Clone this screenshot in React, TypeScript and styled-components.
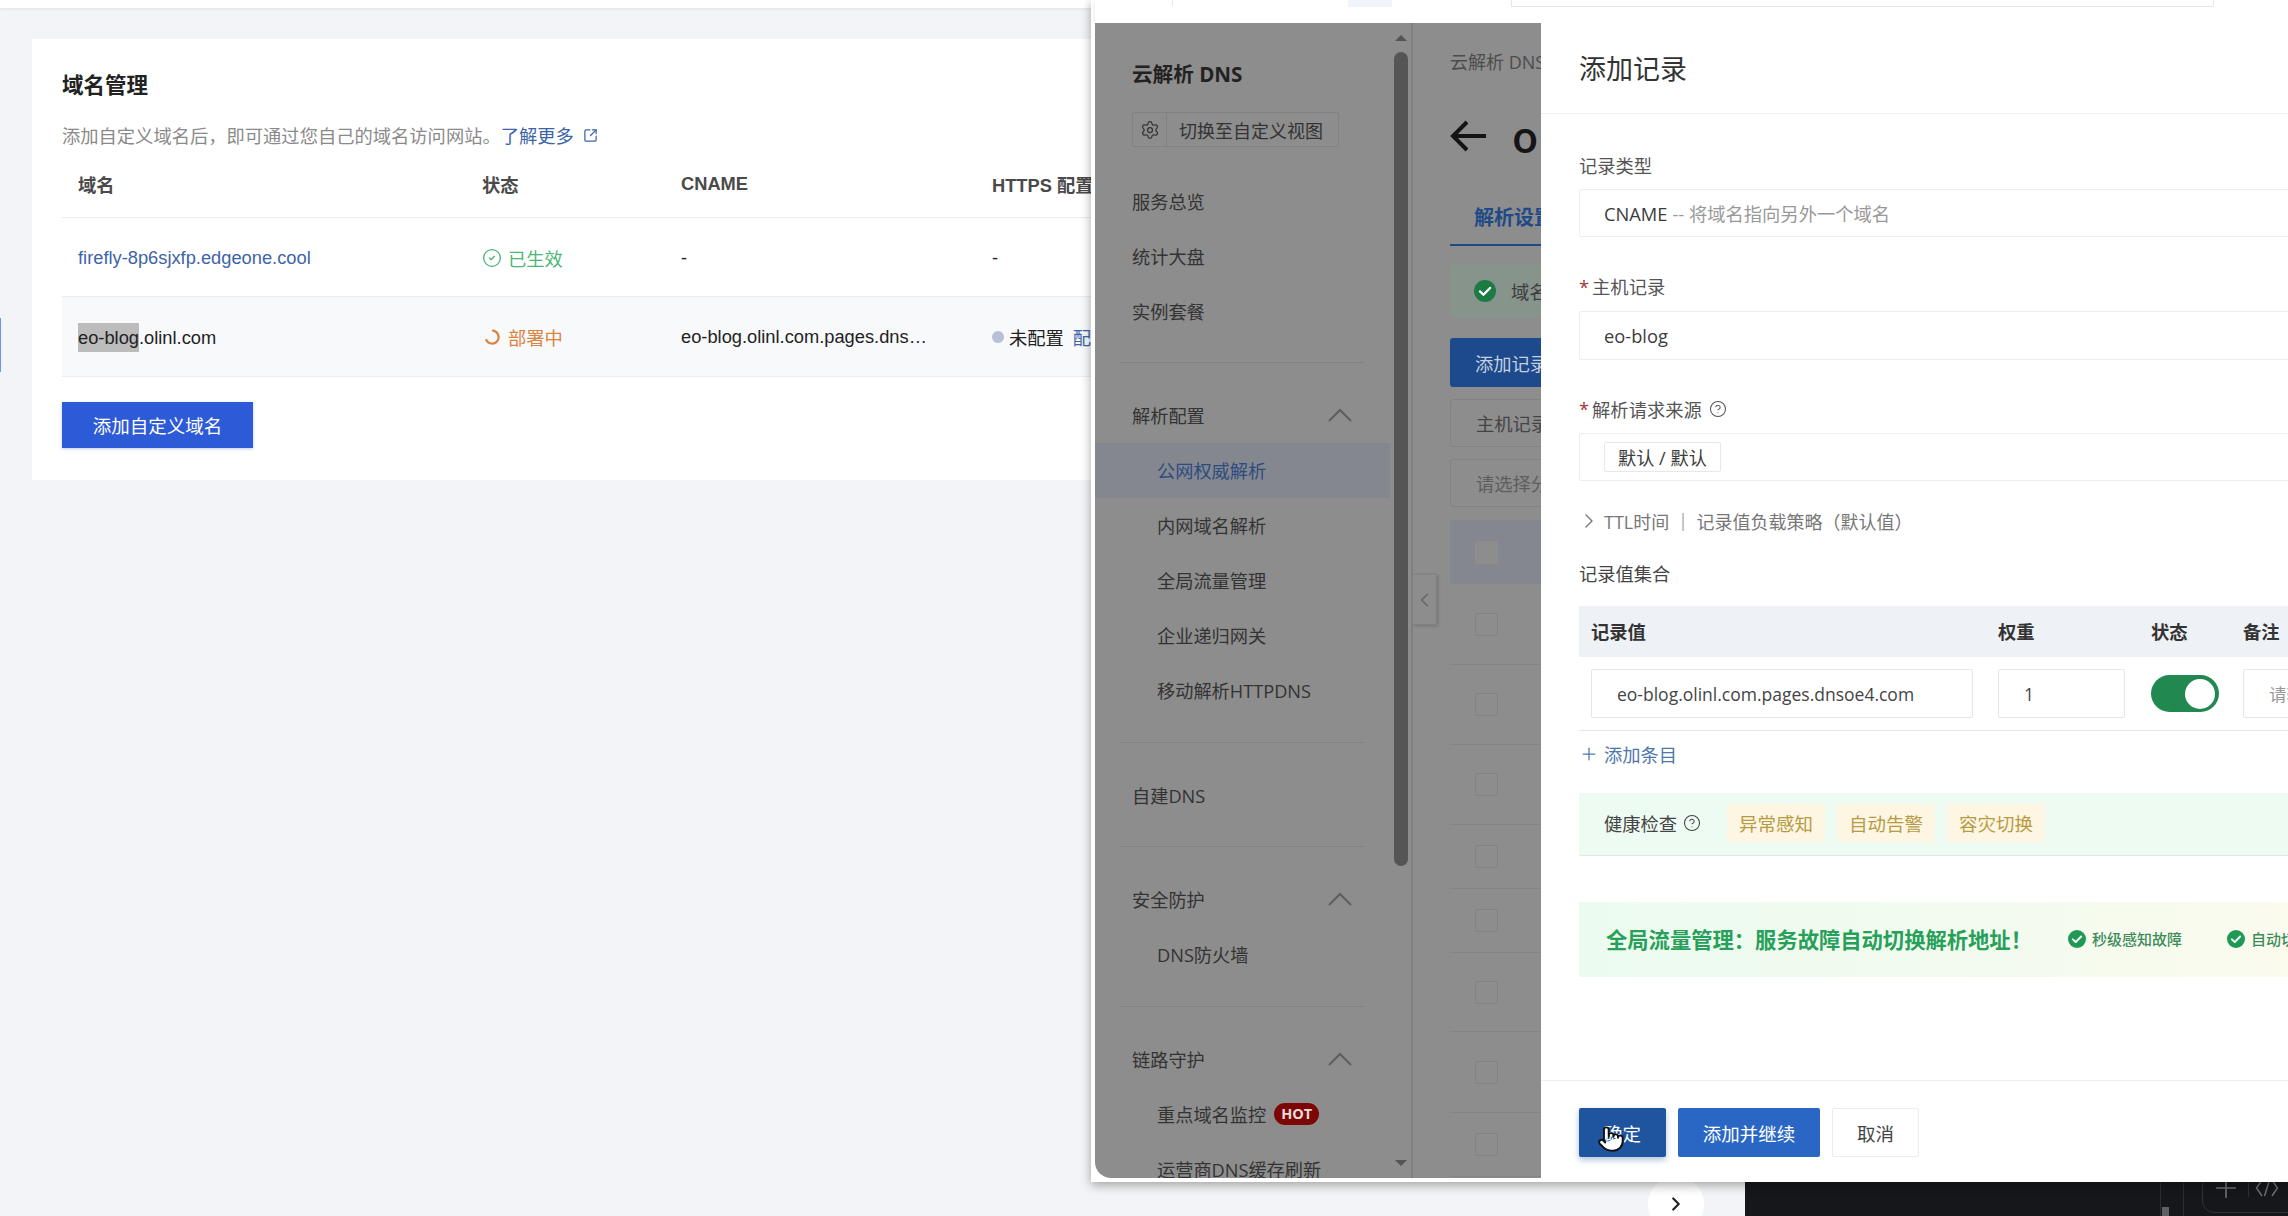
import React from 'react';
import styled, { createGlobalStyle } from 'styled-components';
import {
  ChevronLeft,
  ChevronRight,
  CircleCheck,
  CircleHelp,
  Plus,
  Pointer,
  Settings,
  SquareArrowOutUpRight,
} from 'lucide-react';

const cjk = '"Noto Sans CJK SC", sans-serif';

const GlobalStyle = createGlobalStyle`
  html, body {
    margin: 0;
    padding: 0;
    background: #f3f4f7;
  }
  * {
    box-sizing: border-box;
  }
`;

const Desktop = styled.div`
  position: relative;
  width: 2288px;
  height: 1216px;
  overflow: hidden;
  background: #f3f4f7;
  font-family: "Liberation Sans", ${cjk};
  font-size: 18.3px;
`;

/* left console page */
const ConsoleTop = styled.div`
  height: 8px;
  background: #fff;
  box-shadow: 0 1px 3px rgba(0, 0, 0, 0.08);
`;

const Accent = styled.div`
  position: absolute;
  left: 0;
  top: 318px;
  width: 1px;
  height: 54px;
  background: #6d94e8;
`;

const Card = styled.section`
  margin: 31px 0 0 32px;
  width: 1400px;
  padding: 30px 30px 32px;
  background: #fff;
`;

const CardTitle = styled.h2`
  margin: 0;
  height: 34px;
  line-height: 34px;
  font-size: 21.5px;
  font-weight: 700;
  color: #222;
`;

const CardDesc = styled.p`
  display: flex;
  align-items: center;
  margin: 19px 0 0;
  height: 26px;
  font-size: 18.3px;
  color: #8a8a8a;
`;

const DocLink = styled.a`
  display: inline-flex;
  align-items: center;
  gap: 9px;
  color: #3d64a8;
`;

const DomainGrid = styled.div<{ $head?: boolean; $active?: boolean }>`
  display: grid;
  grid-template-columns: 404px 199px 311px 1fr;
  align-items: center;
  padding-left: 16px;
  height: ${(p) => (p.$head ? '63px' : p.$active ? '80px' : '79px')};
  padding-top: ${(p) => (p.$head ? '0' : '1px')};
  padding-bottom: ${(p) => (p.$head ? '4px' : '0')};
  margin-top: ${(p) => (p.$head ? '7px' : '0')};
  border-bottom: 1px solid #ececef;
  background: ${(p) => (p.$active ? '#f8f9fb' : '#fff')};
  color: ${(p) => (p.$head ? '#4a4a4a' : '#222')};
  font-weight: ${(p) => (p.$head ? 700 : 400)};
`;

const DomainLink = styled.span`
  color: #3d64a8;
`;

const Selected = styled.span`
  display: inline-block;
  height: 29px;
  line-height: 29px;
  background: #bcbcbc;
`;

const Status = styled.span<{ $color: string }>`
  display: flex;
  align-items: center;
  gap: 6px;
  color: ${(p) => p.$color};
`;

const Unset = styled.span`
  display: flex;
  align-items: center;
  gap: 5px;
  white-space: nowrap;
`;

const Dot = styled.i`
  width: 12px;
  height: 12px;
  border-radius: 50%;
  background: #b9bfd6;
`;

const UnsetLink = styled.span`
  margin-left: 4px;
  color: #3d64a8;
`;

const PrimaryAdd = styled.button`
  display: block;
  margin-top: 25px;
  width: 191px;
  height: 46px;
  border: 0;
  background: #2d5ad6;
  color: #fff;
  font: inherit;
  font-size: 18.5px;
  box-shadow: 0 1px 3px rgba(45, 90, 214, 0.3);
`;

/* bottom right: terminal peeking out behind the window */
const Terminal = styled.div`
  position: absolute;
  left: 1745px;
  top: 1180px;
  width: 543px;
  height: 36px;
  background: #15171a;
`;

const TerminalBar = styled.div`
  position: absolute;
  left: 415px;
  top: 0;
  width: 1px;
  height: 36px;
  background: #2c2e32;
  &::before {
    content: '';
    position: absolute;
    left: 23px;
    top: 0;
    width: 1px;
    height: 36px;
    background: #2c2e32;
  }
  &::after {
    content: '';
    position: absolute;
    left: 2px;
    top: 27px;
    width: 7px;
    height: 9px;
    background: #5e6063;
  }
`;

const TerminalTools = styled.div`
  position: absolute;
  left: 457px;
  top: -6px;
  width: 120px;
  height: 39px;
  display: flex;
  align-items: flex-start;
  padding-left: 7px;
  border: 1px solid #303236;
  border-radius: 12px;
  color: #6f7276;
`;

const TerminalIcon = styled.span`
  display: flex;
  margin-top: -3px;
`;

const TerminalDivider = styled.i`
  margin: 6px 6px 0;
  width: 1px;
  height: 16px;
  background: #303236;
`;

const PagerButton = styled.div`
  position: absolute;
  left: 1648px;
  top: 1176px;
  width: 56px;
  height: 56px;
  display: flex;
  align-items: center;
  justify-content: center;
  border-radius: 50%;
  background: #fff;
  color: #222;
`;

/* right browser window */
const BrowserWindow = styled.div`
  position: absolute;
  left: 1091px;
  top: 0;
  width: 1197px;
  height: 1182px;
  padding: 0 0 4px 4px;
  display: flex;
  flex-direction: column;
  background: #fff;
  box-shadow: 0 3px 10px rgba(0, 0, 0, 0.35);
  font-family: "Open Sans", ${cjk};
`;

const WindowTop = styled.div`
  flex: 0 0 23px;
  display: flex;
  align-items: flex-start;
  background: #fff;
  box-shadow: 0 1px 4px rgba(0, 0, 0, 0.12);
`;

const TopDivider = styled.div`
  margin-left: 77px;
  width: 1px;
  height: 6px;
  background: #e7e7e7;
`;

const TopActive = styled.div`
  margin-left: 175px;
  width: 44px;
  height: 7px;
  background: #f1f4fb;
`;

const TopSearch = styled.div`
  margin-left: 119px;
  width: 703px;
  height: 7px;
  border: 1px solid #e8e8e8;
  border-top: 0;
`;

const WindowBody = styled.div`
  flex: 1;
  min-height: 0;
  display: grid;
  grid-template-columns: 318px 128px 747px;
`;

const Sidebar = styled.aside`
  position: relative;
  overflow: hidden;
  padding-top: 32px;
  background: #8d8d8d;
  border-right: 2px solid #7f7f7f;
  border-bottom-left-radius: 16px;
  color: #333;
`;

const SideTitle = styled.div`
  margin-left: 37px;
  height: 38px;
  line-height: 38px;
  font-size: 20.6px;
  font-weight: 700;
  color: #222;
`;

const ViewSwitch = styled.div`
  display: flex;
  align-items: center;
  margin: 19px 0 26px 37px;
  width: 207px;
  height: 35px;
  border: 1px solid #828282;
  border-radius: 2px;
`;

const ViewIcon = styled.span`
  display: flex;
  align-items: center;
  justify-content: center;
  width: 34px;
  height: 100%;
  border-right: 1px solid #828282;
`;

const ViewLabel = styled.span`
  padding-left: 12px;
  white-space: nowrap;
  font-size: 18px;
`;

const NavItem = styled.div<{ $sub?: boolean; $active?: boolean }>`
  display: flex;
  align-items: center;
  justify-content: space-between;
  gap: 8px;
  width: 295px;
  height: 55px;
  padding: 0 38px 0 ${(p) => (p.$sub ? '62px' : '37px')};
  font-size: 18.2px;
  white-space: nowrap;
  background: ${(p) => (p.$active ? '#85878f' : 'transparent')};
  color: ${(p) => (p.$active ? '#2c4c80' : '#333')};
`;

const NavLabel = styled.span`
  display: flex;
  align-items: center;
  gap: 8px;
`;

const HotBadge = styled.span`
  padding: 0 7px;
  height: 22px;
  line-height: 22px;
  border-radius: 11px;
  background: #7d0606;
  color: #e8dcdc;
  font-size: 14.5px;
  font-weight: 700;
`;

const SideDivider = styled.hr`
  margin: 24px 0 24.5px 25px;
  width: 245px;
  height: 1px;
  border: 0;
  background: #828282;
`;

const ScrollTrack = styled.div`
  position: absolute;
  left: 299px;
  top: 8px;
  bottom: 8px;
  width: 14px;
`;

const ScrollThumb = styled.div`
  margin-top: 21px;
  height: 814px;
  border-radius: 7px;
  background: #555;
`;

const ScrollArrow = styled.i<{ $up?: boolean }>`
  position: absolute;
  left: 1px;
  ${(p) => (p.$up ? 'top: 4px;' : 'bottom: 4px;')}
  width: 0;
  height: 0;
  border-left: 6px solid transparent;
  border-right: 6px solid transparent;
  ${(p) => (p.$up ? 'border-bottom: 6px solid #555;' : 'border-top: 6px solid #555;')}
`;

const MainPane = styled.main`
  position: relative;
  overflow: hidden;
  padding-left: 37px;
  background: #8d8d8d;
  color: #333;
`;

const MainColumn = styled.div`
  width: 600px;
`;

const Crumb = styled.div`
  margin-top: 25px;
  height: 28px;
  line-height: 28px;
  font-size: 18px;
  color: #4c4c4c;
  white-space: nowrap;
`;

const Heading = styled.div`
  display: flex;
  align-items: center;
  gap: 25px;
  margin-top: 35px;
  height: 50px;
  font-size: 43px;
  font-weight: 600;
  color: #151515;
`;

const Tab = styled.div`
  display: flex;
  align-items: center;
  margin-top: 28px;
  width: 160px;
  height: 57px;
  padding-left: 24px;
  border-bottom: 2px solid #1f4a88;
  font-weight: 700;
  font-size: 20px;
  color: #1f4a88;
  white-space: nowrap;
`;

const Notice = styled.div`
  display: flex;
  align-items: center;
  gap: 15px;
  margin-top: 18px;
  height: 54px;
  padding-left: 24px;
  border-radius: 4px;
  background: #86948c;
  color: #3c3c3c;
`;

const MainButton = styled.div`
  display: flex;
  align-items: center;
  margin-top: 20px;
  width: 200px;
  height: 49px;
  padding-left: 25px;
  border-radius: 3px;
  background: #1c4a8d;
  color: #c6cfdd;
`;

const FilterInput = styled.div<{ $hint?: boolean }>`
  display: flex;
  align-items: center;
  margin-top: 12px;
  height: 48px;
  padding-left: 25px;
  border: 1px solid #828282;
  border-radius: 3px;
  color: ${(p) => (p.$hint ? '#5e5e5e' : '#444')};
`;

const ListHead = styled.div`
  display: flex;
  align-items: center;
  margin-top: 13px;
  height: 64px;
  padding-left: 25px;
  border-radius: 3px;
  background: #85878f;
`;

const ListRow = styled.div<{ $h: number }>`
  display: flex;
  align-items: center;
  height: ${(p) => p.$h}px;
  padding-left: 25px;
  border-bottom: 1px solid #848484;
`;

const Check = styled.i<{ $fill?: boolean }>`
  width: 23px;
  height: 23px;
  border-radius: 2px;
  border: 1px solid ${(p) => (p.$fill ? '#8d8d8d' : '#828282')};
  background: ${(p) => (p.$fill ? '#8d8d8d' : 'transparent')};
`;

const CollapseTab = styled.div`
  position: absolute;
  left: 0;
  top: 551px;
  width: 24px;
  height: 51px;
  display: flex;
  align-items: center;
  justify-content: center;
  border: 1px solid #818181;
  border-left: 0;
  box-shadow: 1px 1px 3px rgba(0, 0, 0, 0.2);
  background: #8d8d8d;
  color: #666;
`;

/* record drawer */
const Drawer = styled.div`
  display: flex;
  flex-direction: column;
  overflow: hidden;
  background: #fff;
  color: #333;
`;

const DrawerHeader = styled.header`
  flex: 0 0 91px;
  display: flex;
  align-items: center;
  padding: 0 0 2px 38px;
  border-bottom: 1px solid #efefef;
  font-size: 27px;
  color: #333;
`;

const DrawerBody = styled.div`
  flex: 1;
  width: 1000px;
  padding: 38.5px 0 0 38px;
`;

const FieldLabel = styled.label`
  display: flex;
  align-items: center;
  gap: 3px;
  height: 26px;
  padding-bottom: 2px;
  font-size: 18.3px;
  color: #555;
`;

const Required = styled.span`
  color: #a33a3a;
`;

const HelpIcon = styled(CircleHelp)`
  margin-left: 4px;
`;

const FieldBox = styled.div<{ $h?: number }>`
  display: flex;
  align-items: center;
  margin: 10.5px 0 37px;
  height: ${(p) => p.$h ?? 48}px;
  padding-left: 24px;
  border: 1px solid #eeeeee;
  border-radius: 2px;
  font-size: 18.3px;
  color: #3c3c3c;
`;

const Muted = styled.span`
  color: #999;
  margin-left: 5px;
`;

const Placeholder = styled.span`
  color: #999;
`;

const ValueTag = styled.span`
  display: flex;
  align-items: center;
  height: 30px;
  padding: 0 13px;
  border: 1px solid #e8e8e8;
  border-radius: 2px;
  font-size: 18.2px;
`;

const ExpandRow = styled.div`
  display: flex;
  align-items: center;
  gap: 3px;
  margin: -10px 0 0 -2px;
  height: 26px;
  font-size: 18px;
  color: #777;
`;

const SectionLabel = styled.div`
  margin-top: 27px;
  height: 26px;
  line-height: 26px;
  font-size: 18.3px;
  color: #444;
`;

const RecordHead = styled.div`
  display: grid;
  grid-template-columns: 407px 153px 92px 1fr;
  align-items: center;
  margin-top: 19px;
  height: 51px;
  padding: 0 0 2px 12px;
  background: #eef1f6;
  font-weight: 700;
  color: #333;
`;

const RecordRow = styled.div`
  display: grid;
  grid-template-columns: 407px 153px 92px 1fr;
  align-items: center;
  height: 74px;
  padding-left: 12px;
  border-bottom: 1px solid #e8e8e8;
`;

const CellInput = styled.div<{ $w: number }>`
  display: flex;
  align-items: center;
  width: ${(p) => p.$w}px;
  height: 49px;
  padding-left: 25px;
  border: 1px solid #e6e6e6;
  border-radius: 2px;
  font-size: 17.5px;
  color: #444;
`;

const Toggle = styled.span`
  display: flex;
  align-items: center;
  justify-content: flex-end;
  width: 68px;
  height: 37px;
  padding-right: 4px;
  border-radius: 19px;
  background: #21894f;
  &::after {
    content: '';
    width: 30px;
    height: 30px;
    border-radius: 50%;
    background: #fff;
  }
`;

const AddEntry = styled.div`
  display: flex;
  align-items: center;
  gap: 5px;
  margin-top: 10px;
  height: 26px;
  color: #4e76ad;
  font-size: 18.3px;
`;

const HealthBar = styled.div`
  display: flex;
  align-items: center;
  margin-top: 26px;
  height: 63px;
  padding: 0 0 2px 25px;
  background: #edfbf2;
  border-bottom: 1px solid #dfe8e2;
  border-radius: 2px;
  color: #444;
`;

const HealthLabel = styled.span`
  display: flex;
  align-items: center;
  gap: 2px;
  width: 123px;
`;

const HealthTag = styled.span`
  display: flex;
  align-items: center;
  justify-content: center;
  margin-right: 12px;
  width: 98px;
  height: 38px;
  background: #fdf6e3;
  color: #b89a45;
  font-size: 18.5px;
`;

const Banner = styled.div`
  display: flex;
  align-items: center;
  margin-top: 46px;
  height: 75px;
  padding: 0 0 2px 27px;
  background: linear-gradient(90deg, #ecfbf0 0%, #f3fbee 45%, #fbfbee 75%);
`;

const BannerTitle = styled.span`
  width: 462px;
  font-size: 21.3px;
  font-weight: 700;
  color: #27a05a;
  white-space: nowrap;
`;

const BannerPoint = styled.span`
  display: flex;
  align-items: center;
  gap: 6px;
  width: 159px;
  font-size: 15px;
  font-weight: 500;
  color: #3c8c5a;
  white-space: nowrap;
`;

const DrawerFooter = styled.footer`
  flex: 0 0 98px;
  position: relative;
  display: flex;
  gap: 12px;
  padding: 27px 0 0 38px;
  border-top: 1px solid #efefef;
`;

const FootButton = styled.button<{ $kind: 'pressed' | 'primary' | 'plain' }>`
  width: ${(p) => (p.$kind === 'primary' ? '142px' : '87px')};
  height: 49px;
  border-radius: 2px;
  border: ${(p) => (p.$kind === 'plain' ? '1px solid #ececec' : '0')};
  background: ${(p) =>
    p.$kind === 'pressed' ? '#1f559f' : p.$kind === 'primary' ? '#2a67c4' : '#fff'};
  color: ${(p) => (p.$kind === 'plain' ? '#444' : '#fff')};
  box-shadow: ${(p) => (p.$kind === 'pressed' ? '0 3px 6px rgba(31, 85, 159, 0.35)' : 'none')};
  font: inherit;
  font-size: 18.5px;
`;

const Cursor = styled.span`
  position: absolute;
  left: 56px;
  top: 44px;
  color: #111;
  line-height: 0;
`;

const FilledCheck: React.FC<{ size: number; color: string }> = ({ size, color }) => (
  <svg width={size} height={size} viewBox="0 0 24 24">
    <circle cx="12" cy="12" r="12" fill={color} />
    <path d="M6.5 12.5l3.8 3.6 7.2-7.4" fill="none" stroke="#fff" strokeWidth="2.6" strokeLinecap="round" strokeLinejoin="round" />
  </svg>
);

const Spinner: React.FC = () => (
  <svg width="20" height="20" viewBox="0 0 20 20">
    <path d="M11 3.6A6.5 6.5 0 1 1 4.3 13" fill="none" stroke="#d9843f" strokeWidth="2.2" strokeLinecap="round" />
  </svg>
);

const SideChevron: React.FC = () => (
  <svg width="24" height="14" viewBox="0 0 24 14">
    <polyline points="1,13 12,2 23,13" fill="none" stroke="#5e5e5e" strokeWidth="2" />
  </svg>
);

const BackArrow: React.FC = () => (
  <svg width="37" height="32" viewBox="0 0 37 32">
    <path d="M36 16H3M17 2L3 16l14 14" fill="none" stroke="#151515" strokeWidth="4" />
  </svg>
);

const CodeGlyph: React.FC = () => (
  <svg width="24" height="32" viewBox="0 0 24 32">
    <path d="M7 8L1.5 16 7 24M17 8l5.5 8L17 24M14.5 8l-5 16" fill="none" stroke="currentColor" strokeWidth="1.4" />
  </svg>
);

const listHeights = [81, 80, 80, 64, 64, 79, 81, 64];

const SubItems = ['内网域名解析', '全局流量管理', '企业递归网关', '移动解析HTTPDNS'];

const App: React.FC = () => (
  <Desktop>
    <GlobalStyle />
    <ConsoleTop />
    <Accent />
    <Card>
      <CardTitle>域名管理</CardTitle>
      <CardDesc>
        添加自定义域名后，即可通过您自己的域名访问网站。
        <DocLink>
          了解更多
          <SquareArrowOutUpRight size={15} />
        </DocLink>
      </CardDesc>
      <DomainGrid $head>
        <span>域名</span>
        <span>状态</span>
        <span>CNAME</span>
        <span>HTTPS 配置</span>
      </DomainGrid>
      <DomainGrid>
        <DomainLink>firefly-8p6sjxfp.edgeone.cool</DomainLink>
        <Status $color="#4bb777">
          <CircleCheck size={20} strokeWidth={1.6} />
          已生效
        </Status>
        <span>-</span>
        <span>-</span>
      </DomainGrid>
      <DomainGrid $active>
        <span>
          <Selected>eo-blog</Selected>.olinl.com
        </span>
        <Status $color="#d9843f">
          <Spinner />
          部署中
        </Status>
        <span>eo-blog.olinl.com.pages.dns…</span>
        <Unset>
          <Dot />
          未配置
          <UnsetLink>配置</UnsetLink>
        </Unset>
      </DomainGrid>
      <PrimaryAdd>添加自定义域名</PrimaryAdd>
    </Card>

    <Terminal>
      <TerminalBar />
      <TerminalTools>
        <TerminalIcon>
          <Plus size={32} strokeWidth={1.2} />
        </TerminalIcon>
        <TerminalDivider />
        <TerminalIcon>
          <CodeGlyph />
        </TerminalIcon>
      </TerminalTools>
    </Terminal>
    <PagerButton>
      <ChevronRight size={22} strokeWidth={2.4} />
    </PagerButton>

    <BrowserWindow>
      <WindowTop>
        <TopDivider />
        <TopActive />
        <TopSearch />
      </WindowTop>
      <WindowBody>
        <Sidebar>
          <SideTitle>云解析 DNS</SideTitle>
          <ViewSwitch>
            <ViewIcon>
              <Settings size={20} strokeWidth={1.5} />
            </ViewIcon>
            <ViewLabel>切换至自定义视图</ViewLabel>
          </ViewSwitch>
          <NavItem>服务总览</NavItem>
          <NavItem>统计大盘</NavItem>
          <NavItem>实例套餐</NavItem>
          <SideDivider />
          <NavItem>
            解析配置
            <SideChevron />
          </NavItem>
          <NavItem $sub $active>
            公网权威解析
          </NavItem>
          {SubItems.map((item) => (
            <NavItem $sub key={item}>
              {item}
            </NavItem>
          ))}
          <SideDivider />
          <NavItem>自建DNS</NavItem>
          <SideDivider />
          <NavItem>
            安全防护
            <SideChevron />
          </NavItem>
          <NavItem $sub>DNS防火墙</NavItem>
          <SideDivider />
          <NavItem>
            链路守护
            <SideChevron />
          </NavItem>
          <NavItem $sub>
            <NavLabel>
              重点域名监控
              <HotBadge>HOT</HotBadge>
            </NavLabel>
          </NavItem>
          <NavItem $sub>运营商DNS缓存刷新</NavItem>
          <ScrollTrack>
            <ScrollArrow $up />
            <ScrollThumb />
            <ScrollArrow />
          </ScrollTrack>
        </Sidebar>

        <MainPane>
          <MainColumn>
            <Crumb>云解析 DNS</Crumb>
            <Heading>
              <BackArrow />
              olinl.com
            </Heading>
            <Tab>解析设置</Tab>
            <Notice>
              <FilledCheck size={22} color="#1c7a43" />
              域名解析
            </Notice>
            <MainButton>添加记录</MainButton>
            <FilterInput>主机记录</FilterInput>
            <FilterInput $hint>请选择分组</FilterInput>
            <ListHead>
              <Check $fill />
            </ListHead>
            {listHeights.map((h, i) => (
              <ListRow $h={h} key={i}>
                <Check />
              </ListRow>
            ))}
          </MainColumn>
          <CollapseTab>
            <ChevronLeft size={24} strokeWidth={1.6} />
          </CollapseTab>
        </MainPane>

        <Drawer>
          <DrawerHeader>添加记录</DrawerHeader>
          <DrawerBody>
            <FieldLabel>记录类型</FieldLabel>
            <FieldBox>
              CNAME<Muted>-- 将域名指向另外一个域名</Muted>
            </FieldBox>
            <FieldLabel>
              <Required>*</Required>主机记录
            </FieldLabel>
            <FieldBox $h={49}>eo-blog</FieldBox>
            <FieldLabel>
              <Required>*</Required>解析请求来源
              <HelpIcon size={18} strokeWidth={1.4} />
            </FieldLabel>
            <FieldBox>
              <ValueTag>默认 / 默认</ValueTag>
            </FieldBox>
            <ExpandRow>
              <ChevronRight size={24} strokeWidth={1.4} />
              TTL时间 ｜ 记录值负载策略（默认值）
            </ExpandRow>
            <SectionLabel>记录值集合</SectionLabel>
            <RecordHead>
              <span>记录值</span>
              <span>权重</span>
              <span>状态</span>
              <span>备注</span>
            </RecordHead>
            <RecordRow>
              <CellInput $w={382}>eo-blog.olinl.com.pages.dnsoe4.com</CellInput>
              <CellInput $w={127}>1</CellInput>
              <Toggle />
              <CellInput $w={200}>
                <Placeholder>请输入备注</Placeholder>
              </CellInput>
            </RecordRow>
            <AddEntry>
              <Plus size={20} strokeWidth={1.5} />
              添加条目
            </AddEntry>
            <HealthBar>
              <HealthLabel>
                健康检查
                <HelpIcon size={18} strokeWidth={1.4} />
              </HealthLabel>
              <HealthTag>异常感知</HealthTag>
              <HealthTag>自动告警</HealthTag>
              <HealthTag>容灾切换</HealthTag>
            </HealthBar>
            <Banner>
              <BannerTitle>全局流量管理：服务故障自动切换解析地址！</BannerTitle>
              <BannerPoint>
                <FilledCheck size={18} color="#1f9a55" />
                秒级感知故障
              </BannerPoint>
              <BannerPoint>
                <FilledCheck size={18} color="#1f9a55" />
                自动切换
              </BannerPoint>
            </Banner>
          </DrawerBody>
          <DrawerFooter>
            <FootButton $kind="pressed">确定</FootButton>
            <FootButton $kind="primary">添加并继续</FootButton>
            <FootButton $kind="plain">取消</FootButton>
            <Cursor>
              <Pointer size={28} fill="#fff" strokeWidth={1.6} />
            </Cursor>
          </DrawerFooter>
        </Drawer>
      </WindowBody>
    </BrowserWindow>
  </Desktop>
);

export default App;
